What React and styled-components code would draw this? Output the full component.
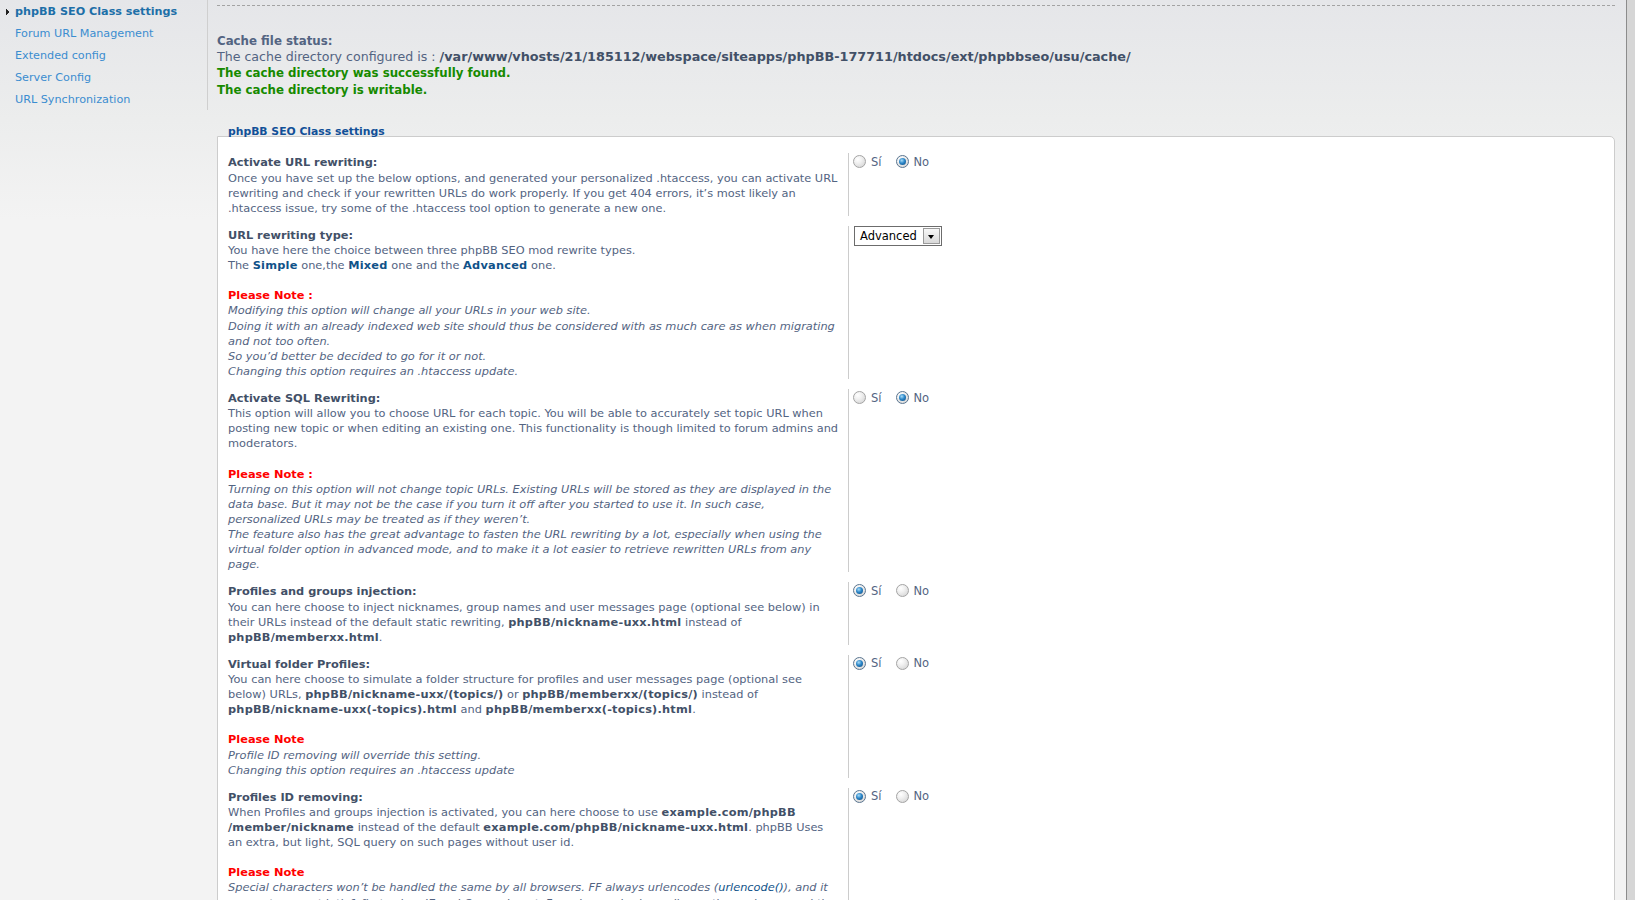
import React from "react";
import styled, { createGlobalStyle } from "styled-components";

const GlobalStyle = createGlobalStyle`
  html, body {
    margin: 0;
    padding: 0;
  }
  body {
    background: #d6d6d6;
    font-family: "DejaVu Sans", Verdana, sans-serif;
    color: #536482;
  }
`;

const Shell = styled.div`
  display: flex;
  margin-right: 8px;
  height: 900px;
  overflow: hidden;
  border-right: 1px solid #8c8c8c;
  background: linear-gradient(#e5e6e9 0, #eceded 120px, #f3f3f3 220px, #f3f3f3 100%);
`;

const Sidebar = styled.ul`
  list-style: none;
  margin: 0;
  padding: 4px 0 0 0;
  width: 207px;
  height: 106px;
  flex-shrink: 0;
  border-right: 1px solid #cfcfcf;
`;

const MenuItem = styled.li`
  position: relative;
  height: 22px;
  line-height: 16px;
  padding-left: 15px;
  font-size: 11.2px;
  font-weight: ${(p) => (p.$active ? "bold" : "normal")};
  color: ${(p) => (p.$active ? "#1d6fa8" : "#3b8dd0")};
  white-space: nowrap;
`;

const Marker = styled.svg`
  position: absolute;
  left: 6px;
  top: 5px;
`;

const Main = styled.div`
  flex: 1;
  min-width: 0;
  padding: 5px 11px 0 9px;
`;

const DashedRule = styled.div`
  border-top: 1px dashed #a3a3a3;
`;

const CacheStatus = styled.div`
  margin-top: 27px;
  font-size: 12.6px;
  line-height: 16.2px;
`;

const CacheTitle = styled.div`
  font-size: 11.8px;
  font-weight: bold;
  color: #536482;
`;

const CacheLine = styled.div`
  color: #536482;
  b {
    font-size: 12.8px;
    color: #425067;
  }
`;

const CacheOk = styled.div`
  font-size: 11.8px;
  font-weight: bold;
  color: #168a00;
`;

const Legend = styled.div`
  margin-top: 30px;
  padding-left: 11px;
  font-size: 10.8px;
  font-weight: bold;
  line-height: 8.6px;
  color: #115098;
`;

const Panel = styled.div`
  background: #fff;
  border: 1px solid #cccccc;
  border-radius: 0 5px 0 0;
  padding: 16px 0 0 10px;
  min-height: 800px;
`;

const Setting = styled.div`
  display: flex;
  margin-bottom: 10.2px;
`;

const Label = styled.div`
  width: 612px;
  flex-shrink: 0;
  padding: 2px 8px 0 0;
  border-right: 1px solid #cccccc;
  font-size: 11.35px;
  line-height: 15.1px;
  color: #536482;
  b {
    letter-spacing: 0.22px;
    color: #425067;
  }
`;

const Title = styled.div`
  font-weight: bold;
  color: #425067;
`;

const Strong = styled.b`
  && {
    color: #105289;
  }
`;

const Note = styled.div`
  font-weight: bold;
  color: #ff0000;
`;

const Explain = styled.div`
  font-style: italic;
`;

const Code = styled.span`
  color: #105289;
`;

const Control = styled.div`
  padding: 1.5px 0 0 4px;
  display: flex;
  align-items: flex-start;
  gap: 14px;
`;

const Choice = styled.label`
  display: inline-flex;
  align-items: center;
  gap: 5px;
  font-size: 11.5px;
  line-height: 14px;
  color: #536482;
`;

const Radio = styled.span`
  position: relative;
  display: inline-block;
  width: 11px;
  height: 11px;
  border-radius: 50%;
  border: 1px solid ${(p) => (p.$checked ? "#5a7590" : "#a4a4a4")};
  background: radial-gradient(circle at 35% 30%, #ffffff 0, #f1f1f1 35%, #cfcfcf 100%);
  &::after {
    content: "";
    display: ${(p) => (p.$checked ? "block" : "none")};
    position: absolute;
    left: 2px;
    top: 2px;
    width: 7px;
    height: 7px;
    border-radius: 50%;
    background: radial-gradient(circle at 40% 35%, #a8dcf8 0, #2b86c8 45%, #0b4479 100%);
  }
`;

const SelectBox = styled.div`
  display: inline-flex;
  align-items: stretch;
  height: 18px;
  margin: -1px 0 0 1px;
  border: 1px solid #6c6c6c;
  background: #fff;
  font-size: 11.5px;
  color: #000;
`;

const SelectText = styled.span`
  line-height: 18px;
  padding: 0 5px 0 5px;
`;

const SelectButton = styled.span`
  position: relative;
  width: 15px;
  margin: 1px;
  border: 1px solid #9a9a9a;
  background: linear-gradient(#f7f7f7, #d9d9d9);
  &::after {
    content: "";
    position: absolute;
    left: 4px;
    top: 6px;
    border-left: 3.5px solid transparent;
    border-right: 3.5px solid transparent;
    border-top: 4px solid #000;
  }
`;

const YesNo = ({ yes }) => (
  <Control>
    <Choice>
      <Radio $checked={yes} />
      Sí
    </Choice>
    <Choice>
      <Radio $checked={!yes} />
      No
    </Choice>
  </Control>
);

const menu = [
  "phpBB SEO Class settings",
  "Forum URL Management",
  "Extended config",
  "Server Config",
  "URL Synchronization",
];

export default function App() {
  return (
    <>
      <GlobalStyle />
      <Shell>
        <Sidebar>
          {menu.map((item, i) => (
            <MenuItem key={item} $active={i === 0}>
              {i === 0 && (
                <Marker width="4" height="6" viewBox="0 0 4 6">
                  <path d="M0 0h1v1h1v1h1v2h-1v1h-1v1h-1z" fill="#222" />
                </Marker>
              )}
              {item}
            </MenuItem>
          ))}
        </Sidebar>

        <Main>
          <DashedRule />
          <CacheStatus>
            <CacheTitle>Cache file status:</CacheTitle>
            <CacheLine>
              The cache directory configured is :{" "}
              <b>/var/www/vhosts/21/185112/webspace/siteapps/phpBB-177711/htdocs/ext/phpbbseo/usu/cache/</b>
            </CacheLine>
            <CacheOk>The cache directory was successfully found.</CacheOk>
            <CacheOk>The cache directory is writable.</CacheOk>
          </CacheStatus>

          <Legend>phpBB SEO Class settings</Legend>
          <Panel>
            <Setting>
              <Label>
                <Title>Activate URL rewriting:</Title>
                Once you have set up the below options, and generated your personalized .htaccess, you can
                activate URL rewriting and check if your rewritten URLs do work properly. If you get 404 errors,
                it’s most likely an .htaccess issue, try some of the .htaccess tool option to generate a new one.
              </Label>
              <YesNo yes={false} />
            </Setting>

            <Setting>
              <Label>
                <Title>URL rewriting type:</Title>
                You have here the choice between three phpBB SEO mod rewrite types.
                <br />
                The <Strong>Simple</Strong> one,the <Strong>Mixed</Strong> one and the{" "}
                <Strong>Advanced</Strong> one.
                <br />
                <br />
                <Note>Please Note :</Note>
                <Explain>
                  Modifying this option will change all your URLs in your web site.
                  <br />
                  Doing it with an already indexed web site should thus be considered with as much care as when
                  migrating and not too often.
                  <br />
                  So you’d better be decided to go for it or not.
                  <br />
                  Changing this option requires an .htaccess update.
                </Explain>
              </Label>
              <Control>
                <SelectBox>
                  <SelectText>Advanced</SelectText>
                  <SelectButton />
                </SelectBox>
              </Control>
            </Setting>

            <Setting>
              <Label>
                <Title>Activate SQL Rewriting:</Title>
                This option will allow you to choose URL for each topic. You will be able to accurately set topic
                URL when posting new topic or when editing an existing one. This functionality is though limited
                to forum admins and moderators.
                <br />
                <br />
                <Note>Please Note :</Note>
                <Explain>
                  Turning on this option will not change topic URLs. Existing URLs will be stored as they are
                  displayed in the data base. But it may not be the case if you turn it off after you started to
                  use it. In such case, personalized URLs may be treated as if they weren’t.
                  <br />
                  The feature also has the great advantage to fasten the URL rewriting by a lot, especially when
                  using the virtual folder option in advanced mode, and to make it a lot easier to retrieve
                  rewritten URLs from any page.
                </Explain>
              </Label>
              <YesNo yes={false} />
            </Setting>

            <Setting>
              <Label>
                <Title>Profiles and groups injection:</Title>
                You can here choose to inject nicknames, group names and user messages page (optional see below)
                in their URLs instead of the default static rewriting, <b>phpBB/nickname-uxx.html</b> instead of{" "}
                <b>phpBB/memberxx.html</b>.
              </Label>
              <YesNo yes />
            </Setting>

            <Setting>
              <Label>
                <Title>Virtual folder Profiles:</Title>
                You can here choose to simulate a folder structure for profiles and user messages page (optional
                see below) URLs, <b>phpBB/nickname-uxx/(topics/)</b> or <b>phpBB/memberxx/(topics/)</b> instead
                of <b>phpBB/nickname-uxx(-topics).html</b> and <b>phpBB/memberxx(-topics).html</b>.
                <br />
                <br />
                <Note>Please Note</Note>
                <Explain>
                  Profile ID removing will override this setting.
                  <br />
                  Changing this option requires an .htaccess update
                </Explain>
              </Label>
              <YesNo yes />
            </Setting>

            <Setting>
              <Label>
                <Title>Profiles ID removing:</Title>
                When Profiles and groups injection is activated, you can here choose to use{" "}
                <b>
                  example.com/phpBB
                  <wbr />
                  /member/nickname
                </b>{" "}
                instead of the default <b>example.com/phpBB/nickname-uxx.html</b>. phpBB Uses an extra, but
                light, SQL query on such pages without user id.
                <br />
                <br />
                <Note>Please Note</Note>
                <Explain>
                  Special characters won’t be handled the same by all browsers. FF always urlencodes (
                  <Code>urlencode()</Code>), and it seems to accept latin1 first, when IE and Opera do not. For
                  advanced urlencoding options, please read the install file.
                </Explain>
              </Label>
              <YesNo yes />
            </Setting>
          </Panel>
        </Main>
      </Shell>
    </>
  );
}
